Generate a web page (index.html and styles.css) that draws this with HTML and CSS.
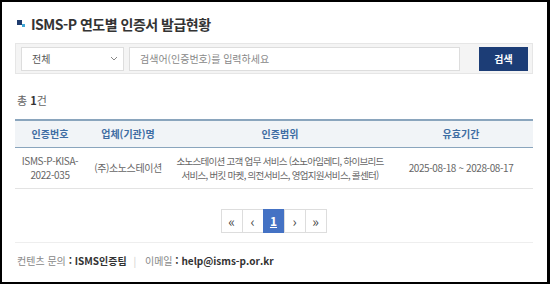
FILE: index.html
```html
<!DOCTYPE html>
<html lang="ko">
<head>
    <meta charset="UTF-8">
    <title>ISMS-P 연도별 인증서 발급현황</title>
    <link rel="stylesheet" href="styles.css">
</head>
<body>
<div class="frame">
    <div class="page-title">
        <span class="title-icon"><i class="sq-dark"></i><i class="sq-light"></i></span>
        ISMS-P 연도별 인증서 발급현황
    </div>

    <div class="search-box">
        <div class="select">
            <span>전체</span>
            <svg width="8" height="5" viewBox="0 0 8 5"><path d="M1 1l3 3 3-3" fill="none" stroke="#888" stroke-width="1"/></svg>
        </div>
        <div class="input">검색어(인증번호)를 입력하세요</div>
        <div class="btn-search">검색</div>
    </div>

    <div class="total">총 <b>1</b>건</div>

    <table class="list-table">
        <colgroup>
            <col style="width:70px">
            <col style="width:86px">
            <col style="width:218px">
            <col style="width:144px">
        </colgroup>
        <thead>
        <tr>
            <th>인증번호</th>
            <th>업체(기관)명</th>
            <th>인증범위</th>
            <th>유효기간</th>
        </tr>
        </thead>
        <tbody>
        <tr>
            <td>ISMS-P-KISA-<br>2022-035</td>
            <td>(주)소노스테이션</td>
            <td class="scope">소노스테이션 고객 업무 서비스 (소노아임레디, 하이브리드<br>서비스, 버킷 마켓, 의전서비스, 영업지원서비스, 콜센터)</td>
            <td>2025-08-18 ~ 2028-08-17</td>
        </tr>
        </tbody>
    </table>

    <div class="paging">
        <a href="#">&laquo;</a>
        <a href="#">&lsaquo;</a>
        <a href="#" class="on">1</a>
        <a href="#">&rsaquo;</a>
        <a href="#">&raquo;</a>
    </div>

    <div class="footer">
        <span class="label">컨텐츠 문의</span> <b>: ISMS인증팀</b>
        <span class="bar">|</span>
        <span class="label">이메일</span> <b>: help@isms-p.or.kr</b>
    </div>
</div>
</body>
</html>
```

FILE: styles.css
```css
* {
    box-sizing: border-box;
}

body {
    margin: 0;
    font-family: "Noto Sans CJK KR", "Noto Sans", sans-serif;
    color: #333333;
}

.frame {
    width: 550px;
    height: 284px;
    border: 2px solid #000000;
    border-right-width: 3px;
    background: #ffffff;
    padding: 0 14px 0 13px;
    overflow: hidden;
}

.page-title {
    display: flex;
    align-items: center;
    height: 26px;
    margin-top: 9px;
    padding-left: 2px;
    font-size: 14px;
    font-weight: bold;
    color: #333333;
    letter-spacing: -0.5px;
}

.title-icon {
    position: relative;
    display: inline-block;
    width: 8px;
    height: 8px;
    margin-right: 6px;
}

.title-icon i {
    position: absolute;
    display: block;
}

.sq-dark {
    left: 0;
    top: 0;
    width: 5px;
    height: 5px;
    background: #1f3c6e;
}

.sq-light {
    left: 5px;
    top: 4px;
    width: 3px;
    height: 3px;
    background: #3fa6d6;
}

.search-box {
    display: flex;
    align-items: center;
    margin-top: 6px;
    height: 31px;
    padding: 0 4px 0 5px;
    background: #f4f4f4;
    border: 1px solid #e6e6e6;
}

.select {
    display: flex;
    align-items: center;
    justify-content: space-between;
    width: 103px;
    height: 24px;
    padding: 0 5px 0 10px;
    background: #ffffff;
    border: 1px solid #dddddd;
    font-size: 10px;
    color: #555555;
}

.input {
    display: flex;
    align-items: center;
    width: 331px;
    height: 24px;
    margin-left: 5px;
    padding-left: 10px;
    background: #ffffff;
    border: 1px solid #dddddd;
    font-size: 10px;
    color: #888888;
}

.btn-search {
    display: flex;
    align-items: center;
    justify-content: center;
    width: 49px;
    height: 24px;
    margin-left: auto;
    background: #1c3d76;
    color: #ffffff;
    font-size: 10px;
    font-weight: bold;
}

.total {
    margin-top: 18px;
    padding-left: 2px;
    font-size: 11px;
    color: #666666;
}

.total b {
    color: #333333;
}

.list-table {
    width: 518px;
    margin-top: 11px;
    border-collapse: collapse;
    table-layout: fixed;
    font-size: 10px;
}

.list-table th {
    height: 27px;
    background: #f1f4f7;
    border-top: 2px solid #8aa5bd;
    border-bottom: 1px solid #8aa5bd;
    color: #3e6da3;
    font-weight: bold;
}

.list-table td {
    height: 41px;
    padding: 0;
    text-align: center;
    color: #666666;
    line-height: 14px;
    border-bottom: 1px solid #e3e3e3;
    letter-spacing: -0.4px;
    white-space: nowrap;
}

.list-table td.scope {
    font-size: 9.5px;
    letter-spacing: -0.7px;
}

.paging {
    display: flex;
    justify-content: center;
    margin-top: 20px;
}

.paging a {
    display: flex;
    align-items: center;
    justify-content: center;
    width: 22px;
    height: 24px;
    margin-left: -1px;
    border: 1px solid #dddddd;
    color: #444444;
    font-size: 14px;
    text-decoration: none;
}

.paging a.on {
    background: #4472c4;
    border-color: #4472c4;
    color: #ffffff;
    font-size: 12px;
    font-weight: bold;
    text-decoration: underline;
}

.footer {
    margin-top: 9px;
    padding-top: 10px;
    padding-left: 2px;
    border-top: 1px solid #eeeeee;
    font-size: 10px;
    color: #888888;
}

.footer b {
    color: #333333;
}

.footer .bar {
    margin: 0 6px 0 4px;
    color: #cccccc;
}
```
